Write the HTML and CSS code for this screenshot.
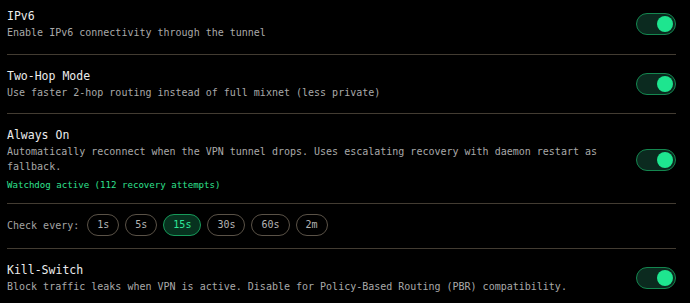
FILE: index.html
```html
<!DOCTYPE html>
<html>
<head>
<meta charset="utf-8">
<link rel="stylesheet" href="styles.css">
</head>
<body>
<div class="panel">
  <div class="row first">
    <div class="text">
      <div class="title">IPv6</div>
      <div class="desc">Enable IPv6 connectivity through the tunnel</div>
    </div>
    <div class="toggle on"><span class="knob"></span></div>
  </div>
  <div class="row">
    <div class="text">
      <div class="title">Two-Hop Mode</div>
      <div class="desc">Use faster 2-hop routing instead of full mixnet (less private)</div>
    </div>
    <div class="toggle on"><span class="knob"></span></div>
  </div>
  <div class="row watch">
    <div class="text">
      <div class="title">Always On</div>
      <div class="desc">Automatically reconnect when the VPN tunnel drops. Uses escalating recovery with daemon restart as fallback.</div>
      <div class="status">Watchdog active (112 recovery attempts)</div>
    </div>
    <div class="toggle on"><span class="knob"></span></div>
  </div>
  <div class="row interval">
    <span class="label">Check every:</span>
    <div class="pills">
      <span class="pill">1s</span>
      <span class="pill">5s</span>
      <span class="pill active">15s</span>
      <span class="pill">30s</span>
      <span class="pill">60s</span>
      <span class="pill">2m</span>
    </div>
  </div>
  <div class="row last">
    <div class="text">
      <div class="title">Kill-Switch</div>
      <div class="desc">Block traffic leaks when VPN is active. Disable for Policy-Based Routing (PBR) compatibility.</div>
    </div>
    <div class="toggle on"><span class="knob"></span></div>
  </div>
</div>
</body>
</html>
```
FILE: styles.css
```css
html, body {
  margin: 0;
  padding: 0;
  background: #000;
}
body {
  font-family: "DejaVu Sans Mono", monospace;
  color: #e6e6e6;
}
.panel {
  width: 669px;
  margin: 8px 0 0 7px;
}
.row {
  display: flex;
  align-items: center;
  gap: 16px;
  padding: 13px 0;
  border-bottom: 1px solid #433c32;
}
.row.first {
  padding-top: 0;
}
.row.last {
  border-bottom: none;
}
.text {
  flex: 1;
  min-width: 0;
}
.title {
  font-size: 11.5px;
  line-height: 16px;
  color: #ececec;
}
.desc {
  margin-top: 2px;
  font-size: 10px;
  line-height: 14.5px;
  color: #a9a9a9;
}
.row.watch {
  padding-bottom: 11px;
}
.status {
  margin-top: 4px;
  font-size: 9.1px;
  line-height: 14px;
  color: #2fe08f;
}
.toggle {
  box-sizing: border-box;
  width: 40px;
  height: 22px;
  border-radius: 11px;
  border: 1px solid #14864f;
  background: #0b2a1f;
  display: flex;
  align-items: center;
  justify-content: flex-end;
  padding-right: 2px;
  flex: none;
}
.knob {
  width: 16px;
  height: 16px;
  border-radius: 50%;
  background: #1ee58f;
}
.row.interval {
  gap: 8px;
  padding: 10px 0 12px;
}
.label {
  font-size: 10px;
  color: #a3a3a3;
}
.pills {
  display: flex;
  gap: 6px;
}
.pill {
  box-sizing: border-box;
  height: 22px;
  padding: 0 9px;
  border: 1px solid #5a5247;
  border-radius: 11px;
  font-size: 10px;
  line-height: 20px;
  color: #b4b4b4;
}
.pill.active {
  background: #07321f;
  border-color: #179a5a;
  color: #2ee89a;
}
```
